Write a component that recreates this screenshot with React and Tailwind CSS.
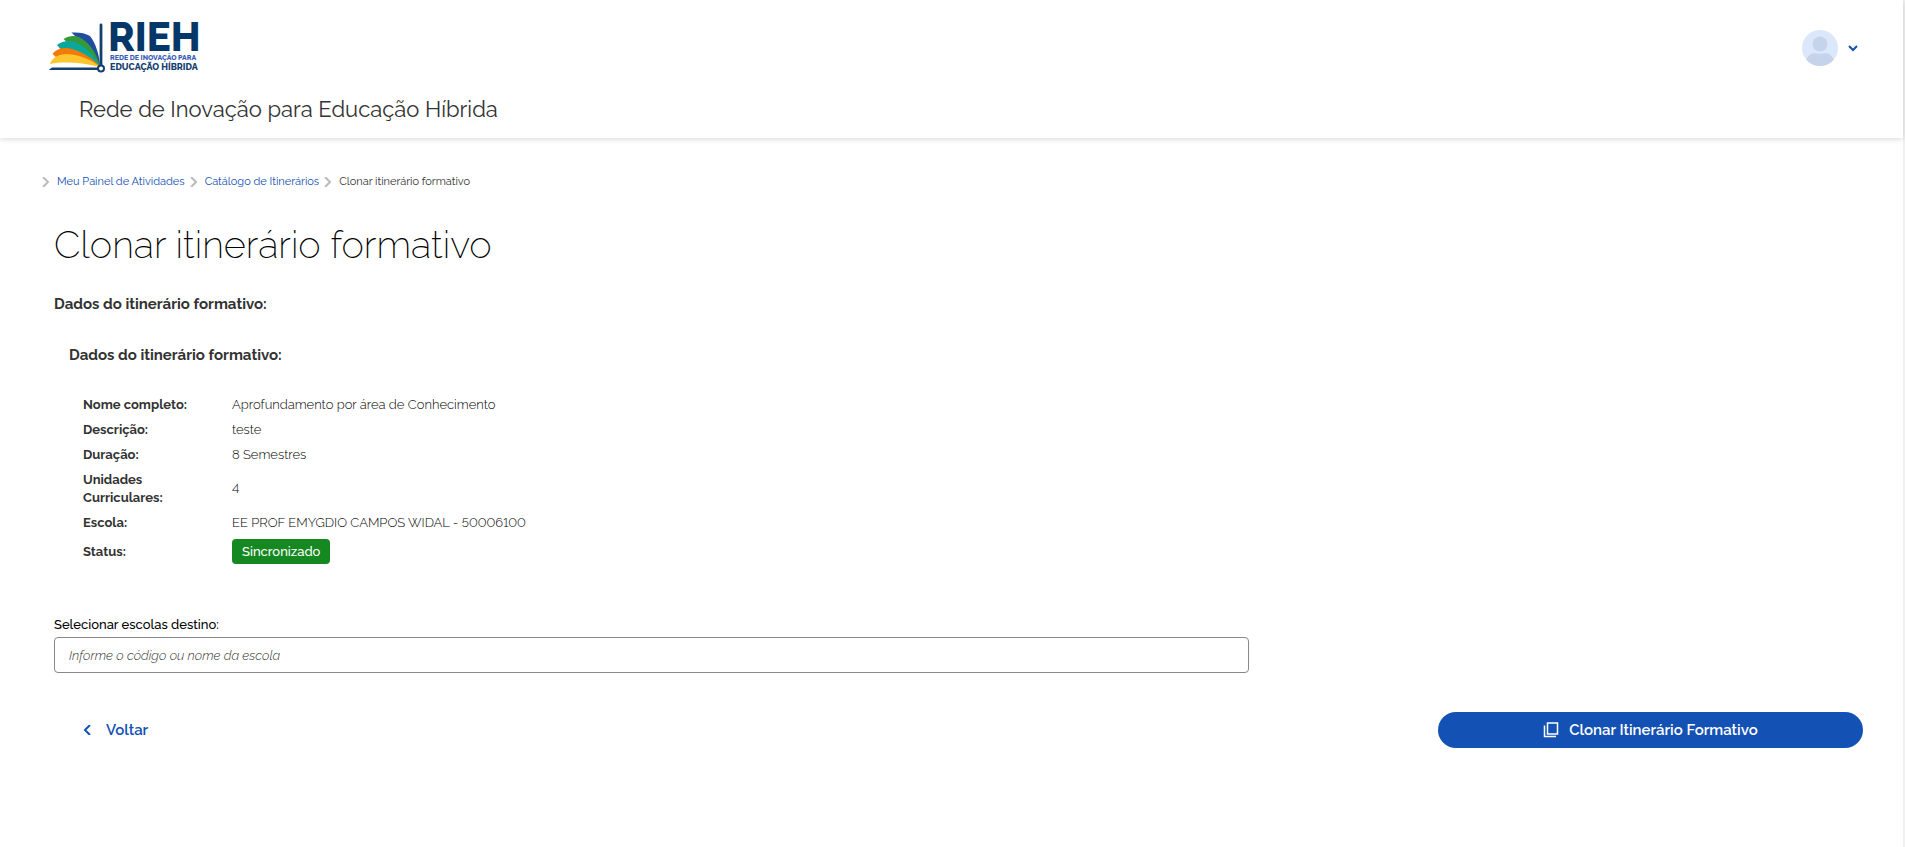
import clsx from 'clsx';

const BREADCRUMB = [
  { label: 'Meu Painel de Atividades', href: '#painel' },
  { label: 'Catálogo de Itinerários', href: '#catalogo' },
  { label: 'Clonar itinerário formativo' },
];

const DETAILS = [
  { label: 'Nome completo:', value: 'Aprofundamento por área de Conhecimento' },
  { label: 'Descrição:', value: 'teste' },
  { label: 'Duração:', value: '8 Semestres' },
  { label: 'Unidades Curriculares:', value: '4' },
  { label: 'Escola:', value: 'EE PROF EMYGDIO CAMPOS WIDAL - 50006100' },
  { label: 'Status:', value: 'Sincronizado', badge: true },
];

function Logo() {
  return (
    <svg viewBox="0 0 160 54" className="h-[54px] w-[160px] overflow-visible" role="img" aria-label="RIEH">
      {/* Open book: five page fans, spine and base */}
      <path d="M22.5 12.5 C30 12 36 13 41 16 C47 24 50 34 51 45 L30 20 Z" fill="#1f4ea1" />
      <path d="M14.5 19 C19 16 25 15 30 17 C40 22 47 32 51 46 L22 26 Z" fill="#35993a" />
      <path d="M8 25 C13 21 20 20 26 22 C36 26 45 35 51 46 L14 32 Z" fill="#0aa79c" />
      <path d="M3.5 34 C8 28 16 27 23 29 C34 32 44 39 51 46 L8 38 Z" fill="#f37a06" />
      <path d="M1 44 C3 38 9 34 18 34 C31 35 42 39 51 47 C36 43 16 41 1 44 Z" fill="#fdc52f" />
      <path d="M0 49.7 L3 47.5 H49 V50 H0 Z" fill="#13406f" />
      <path d="M52 5 V45" stroke="#13406f" strokeWidth="2.8" strokeLinecap="round" fill="none" />
      <circle cx="52" cy="48.5" r="3" fill="#fff" stroke="#13406f" strokeWidth="2" />
      <text x="59" y="31" fill="#073768" className="text-[40px] font-extrabold">RIEH</text>
      <text x="61" y="40" fill="#3a5db4" className="text-[7px] font-extrabold">REDE DE INOVAÇÃO PARA</text>
      <text x="61" y="50" fill="#14406f" className="text-[9px] font-extrabold">EDUCAÇÃO HÍBRIDA</text>
    </svg>
  );
}

function Avatar() {
  return (
    <svg viewBox="0 0 36 36" className="size-9" aria-hidden="true">
      <defs>
        <clipPath id="avatar">
          <circle cx="18" cy="18" r="18" />
        </clipPath>
      </defs>
      <g clipPath="url(#avatar)">
        <rect width="36" height="36" fill="#dbe8fb" />
        <circle cx="18" cy="14" r="7.5" fill="#c5d4eb" />
        <path d="M4 36 V31 C5 26 9 23 13 23 C16 24 20 24 23 23 C27 23 31 26 32 31 V36 Z" fill="#c5d4eb" />
      </g>
    </svg>
  );
}

function Chevron({ d, className }) {
  return (
    <svg viewBox="0 0 10 10" className={clsx('shrink-0', className)} fill="none" stroke="currentColor" strokeWidth="2" aria-hidden="true">
      <path d={d} />
    </svg>
  );
}

export default function App() {
  return (
    <div className="min-h-screen border-r-2 border-[#f1f1f1] bg-white font-['Raleway','Lato',sans-serif] text-[13px] text-[#333] lining-nums">
      <header className="pt-5 pr-[45px] pb-[11px] pl-[49px] shadow-[0_1px_6px_rgba(0,0,0,0.16)]">
        <div className="flex items-start justify-between">
          <a href="#inicio"><Logo /></a>
          <button type="button" aria-label="Menu do usuário" className="mt-2.5 flex items-center gap-2.5">
            <Avatar />
            <Chevron d="M1 3 L5 7 L9 3" className="size-2.5 text-[#1351b4]" />
          </button>
        </div>
        <p className="mt-[17px] ml-[30px] text-[22px] leading-9">Rede de Inovação para Educação Híbrida</p>
      </header>

      <main className="pt-[34px] pr-10 pl-[54px]">
        <nav aria-label="Trilha de navegação" className="-ml-[13px]">
          <ol className="flex items-center text-[11px] leading-5">
            {BREADCRUMB.map((item) => (
              <li key={item.label} className="mr-1 flex items-center gap-1.5">
                <Chevron d="M2 0 L7 5 L2 10" className="size-2.5 text-[#bbb]" />
                {item.href ? (
                  <a href={item.href} className="text-[#1351b4]">{item.label}</a>
                ) : (
                  <span aria-current="page">{item.label}</span>
                )}
              </li>
            ))}
          </ol>
        </nav>

        <h1 className="mt-[29px] text-[38px] leading-12 font-extralight text-black">Clonar itinerário formativo</h1>
        <h2 className="mt-[23px] text-[15px] leading-6 font-bold">Dados do itinerário formativo:</h2>

        <section className="pt-[27px] pl-[15px]">
          <h3 className="text-[15px] leading-6 font-bold">Dados do itinerário formativo:</h3>
          <table className="mt-[25px] ml-3.5 text-left">
            <tbody>
              {DETAILS.map(({ label, value, badge }) => (
                <tr key={label}>
                  <th scope="row" className="w-[149px] pt-1 pr-10 pb-[3px] leading-[18px] font-bold">{label}</th>
                  <td className={clsx('leading-[18px]', !badge && 'font-light text-black')}>
                    {badge ? (
                      <span className="my-1 inline-block rounded-sm bg-[#168821] px-2.5 py-1 leading-[17px] font-medium text-white">{value}</span>
                    ) : value}
                  </td>
                </tr>
              ))}
            </tbody>
          </table>
        </section>

        <form>
          <div className="mt-[47px] grid grid-cols-12 gap-8">
            <div className="col-span-8">
              <label htmlFor="escolas" className="block leading-5 font-medium text-black">Selecionar escolas destino:</label>
              <input
                id="escolas"
                type="text"
                placeholder="Informe o código ou nome da escola"
                className="mt-0.5 h-9 w-full rounded border border-[#888] px-3.5 placeholder:text-[#333] placeholder:italic placeholder:font-light"
              />
            </div>
          </div>
          <div className="mt-[39px] flex items-center justify-between">
            <button type="button" className="ml-7 flex h-9 items-center gap-3.5 text-[15px] font-semibold text-[#1351b4]">
              <Chevron d="M8 0 L3 5 L8 10" className="size-2.5" />
              Voltar
            </button>
            <button type="button" className="flex h-9 w-[23.5%] items-center justify-center gap-2.5 rounded-full bg-[#1351b4] text-[15px] font-semibold text-white">
              <svg viewBox="0 0 16 16" className="size-4" fill="none" stroke="currentColor" strokeWidth="1.5" aria-hidden="true">
                <path d="M4.5 1 H14.5 V12 H4.5 Z M1.5 3.5 V14.5 H13" />
              </svg>
              Clonar Itinerário Formativo
            </button>
          </div>
        </form>
      </main>
    </div>
  );
}
